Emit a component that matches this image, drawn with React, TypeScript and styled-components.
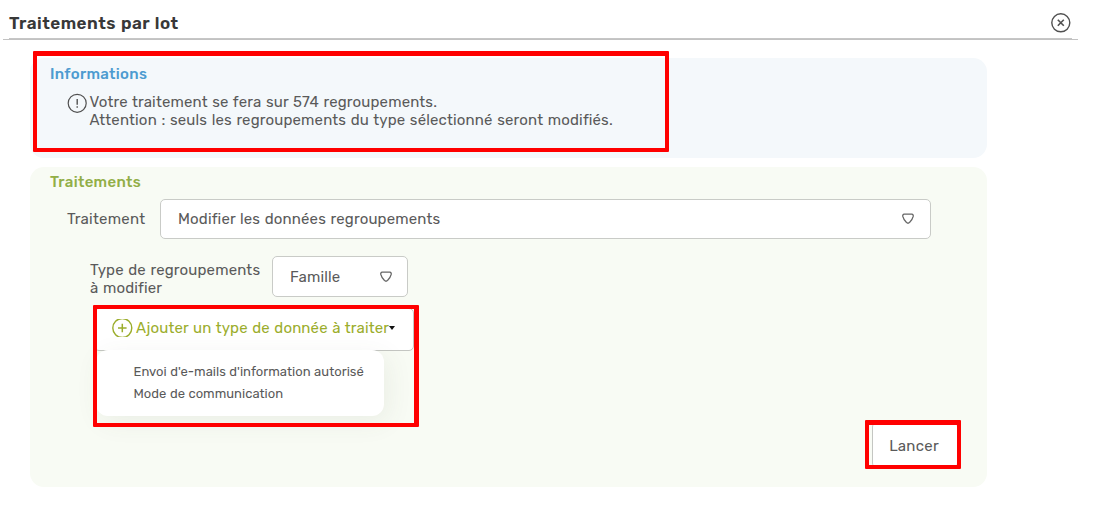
import React from "react";
import styled, { createGlobalStyle } from "styled-components";

const Global = createGlobalStyle`
  * { box-sizing: border-box; }
  body { margin: 0; background: #fff; font-family: Rubik, Roboto, sans-serif; color: #4a4a4a; }
  svg { display: block; flex: none; }
`;

const Page = styled.main`
  position: relative;
  width: 1111px;
  height: 515px;
  overflow: hidden;
`;

const Header = styled.header`
  display: flex;
  align-items: center;
  justify-content: space-between;
  height: 39px;
  margin: 0 39px 0 9px;
  padding: 7px 1px 0 0;
  border-bottom: 1px solid #c6c6c6;
`;

const Rule = styled.div`
  height: 1px;
  margin: 0 33px 0 3px;
  background: #c2c2c2;
`;

const Text = styled.span<{ $ls?: number; $ws?: number; $size?: number; $weight?: number; $color?: string }>`
  margin: 0;
  font-size: ${(p) => p.$size ?? 15}px;
  line-height: 18px;
  font-weight: ${(p) => p.$weight ?? 400};
  letter-spacing: ${(p) => p.$ls ?? 0.16}px;
  word-spacing: ${(p) => p.$ws ?? 0.7}px;
  color: ${(p) => p.$color ?? "#5a5a5a"};
  white-space: nowrap;
`;

const Panel = styled.section<{ $bg: string; $height: number; $top: number; $pad: number }>`
  display: flex;
  flex-direction: column;
  align-items: flex-start;
  width: 957px;
  height: ${(p) => p.$height}px;
  margin: ${(p) => p.$top}px 0 0 30px;
  padding: ${(p) => p.$pad}px 0 0 20px;
  border-radius: 14px;
  background: ${(p) => p.$bg};
`;

const Notice = styled.div`
  display: flex;
  gap: 2.5px;
  margin: 10px 0 0 17px;
`;

const Lines = styled.div`
  display: flex;
  flex-direction: column;
`;

const Row = styled.div<{ $top: number; $left: number }>`
  display: flex;
  align-items: center;
  margin: ${(p) => p.$top}px 0 0 ${(p) => p.$left}px;
`;

const Label = styled.label<{ $width: number; $drop?: number }>`
  display: flex;
  flex-direction: column;
  width: ${(p) => p.$width}px;
  padding-top: ${(p) => p.$drop ?? 0}px;
`;

const Select = styled.button<{ $width: number; $height: number; $pad: number }>`
  display: flex;
  align-items: center;
  justify-content: space-between;
  width: ${(p) => p.$width}px;
  height: ${(p) => p.$height}px;
  padding: 0 ${(p) => p.$pad}px 0 17px;
  border: 1px solid #c9cbc7;
  border-radius: 5px;
  background: #fff;
  font: inherit;
`;

const AddButton = styled.button`
  display: flex;
  align-items: center;
  gap: 3px;
  width: 320px;
  height: 43px;
  margin: 11px 0 0 44px;
  padding: 0 0 3px 17px;
  border: 1px solid #c4c6c2;
  border-radius: 5px;
  background: #fff;
  font: inherit;
`;

const Caret = styled.i`
  width: 0;
  height: 0;
  margin-left: -3px;
  border: 3px solid transparent;
  border-top: 4px solid #111;
  border-bottom: 0;
`;

const Menu = styled.div`
  position: absolute;
  left: 96px;
  top: 350px;
  display: flex;
  flex-direction: column;
  gap: 4px;
  width: 288px;
  height: 66px;
  padding: 13px 0 0 37.5px;
  border-radius: 12px;
  background: #fff;
  box-shadow: 4px 6px 26px rgba(80, 90, 60, 0.08);
`;

const Launch = styled.button`
  align-self: flex-end;
  width: 86px;
  height: 46px;
  margin: 71px 29px 0 0;
  padding: 0 2px 0 0;
  border: 1px solid #c4c6c2;
  border-radius: 5px;
  background: #fff;
  font: inherit;
`;

const Highlight = styled.div<{ $x: number; $y: number; $w: number; $h: number; $b: string }>`
  position: absolute;
  left: ${(p) => p.$x}px;
  top: ${(p) => p.$y}px;
  width: ${(p) => p.$w}px;
  height: ${(p) => p.$h}px;
  border: solid #f00;
  border-width: ${(p) => p.$b};
  border-radius: 1px;
  pointer-events: none;
`;

const Chevron = () => (
  <svg width="12" height="12" viewBox="0 0 12 12" fill="none" stroke="#666" strokeWidth="1.3">
    <path d="M2.2 1.2H9.8Q11.5 1.4 11.2 3.4Q10.3 7 7.5 9.6Q6 10.9 4.5 9.6Q1.7 7 .8 3.4Q.5 1.4 2.2 1.2Z" />
  </svg>
);

export default function App() {
  return (
    <Page>
      <Global />
      <Header>
        <Text as="h1" $size={17} $weight={600} $ls={0.48} $ws={0.7} $color="#383838">Traitements par lot</Text>
        <svg width="20" height="20" viewBox="0 0 20 20" fill="none" stroke="#505050">
          <circle cx="9.8" cy="9.8" r="9" strokeWidth="1.4" />
          <path d="M6.8 6.8L12.8 12.8M12.8 6.8L6.8 12.8" strokeWidth="1.6" />
        </svg>
      </Header>
      <Rule />

      <Panel $bg="#f4f8fb" $height={100} $top={18} $pad={7}>
        <Text $weight={500} $color="#4c9bd0" $ls={0.3}>Informations</Text>
        <Notice>
          <svg width="20" height="20" viewBox="0 0 20 20" fill="none" stroke="#505050">
            <circle cx="10.2" cy="10.3" r="9" strokeWidth="1.2" />
            <path d="M10.2 6V11.7M10.2 13.2V14.7" strokeWidth="1.4" />
          </svg>
          <Lines>
            <Text>Votre traitement se fera sur 574 regroupements.</Text>
            <Text>Attention : seuls les regroupements du type sélectionné seront modifiés.</Text>
          </Lines>
        </Notice>
      </Panel>

      <Panel $bg="#f8fbf4" $height={320} $top={9} $pad={6}>
        <Text $weight={500} $color="#92ae47" $ls={0.3}>Traitements</Text>
        <Row $top={8} $left={17}>
          <Label $width={93}><Text $ls={0.25}>Traitement</Text></Label>
          <Select $width={771} $height={40} $pad={16}>
            <Text>Modifier les données regroupements</Text>
            <Chevron />
          </Select>
        </Row>
        <Row $top={17} $left={40}>
          <Label $width={182} $drop={4}>
            <Text>Type de regroupements</Text>
            <Text>à modifier</Text>
          </Label>
          <Select $width={136} $height={41} $pad={15}>
            <Text>Famille</Text>
            <Chevron />
          </Select>
        </Row>
        <AddButton>
          <svg width="21" height="18" viewBox="0 0 21 18" fill="none" stroke="#9bad2c">
            <circle cx="10.3" cy="9" r="9.5" strokeWidth="1.4" />
            <path d="M6 9H14.6M10.3 4.7V13.3" strokeWidth="1.5" />
          </svg>
          <Text $color="#9bad2c" $ls={0.14}>Ajouter un type de donnée à traiter</Text>
          <Caret />
        </AddButton>
        <Launch><Text $ls={0.25}>Lancer</Text></Launch>
      </Panel>

      <Menu>
        <Text $size={13} $ls={0.02} $ws={0.3}>Envoi d'e-mails d'information autorisé</Text>
        <Text $size={13} $ls={0.02} $ws={0.3}>Mode de communication</Text>
      </Menu>

      <Highlight $x={33} $y={51} $w={636} $h={101} $b="5px 4px 4px 4px" />
      <Highlight $x={93} $y={305} $w={326} $h={122} $b="4px 5px 4px 4px" />
      <Highlight $x={865} $y={420} $w={96} $h={49} $b="5px 4px 4px 4px" />
    </Page>
  );
}
